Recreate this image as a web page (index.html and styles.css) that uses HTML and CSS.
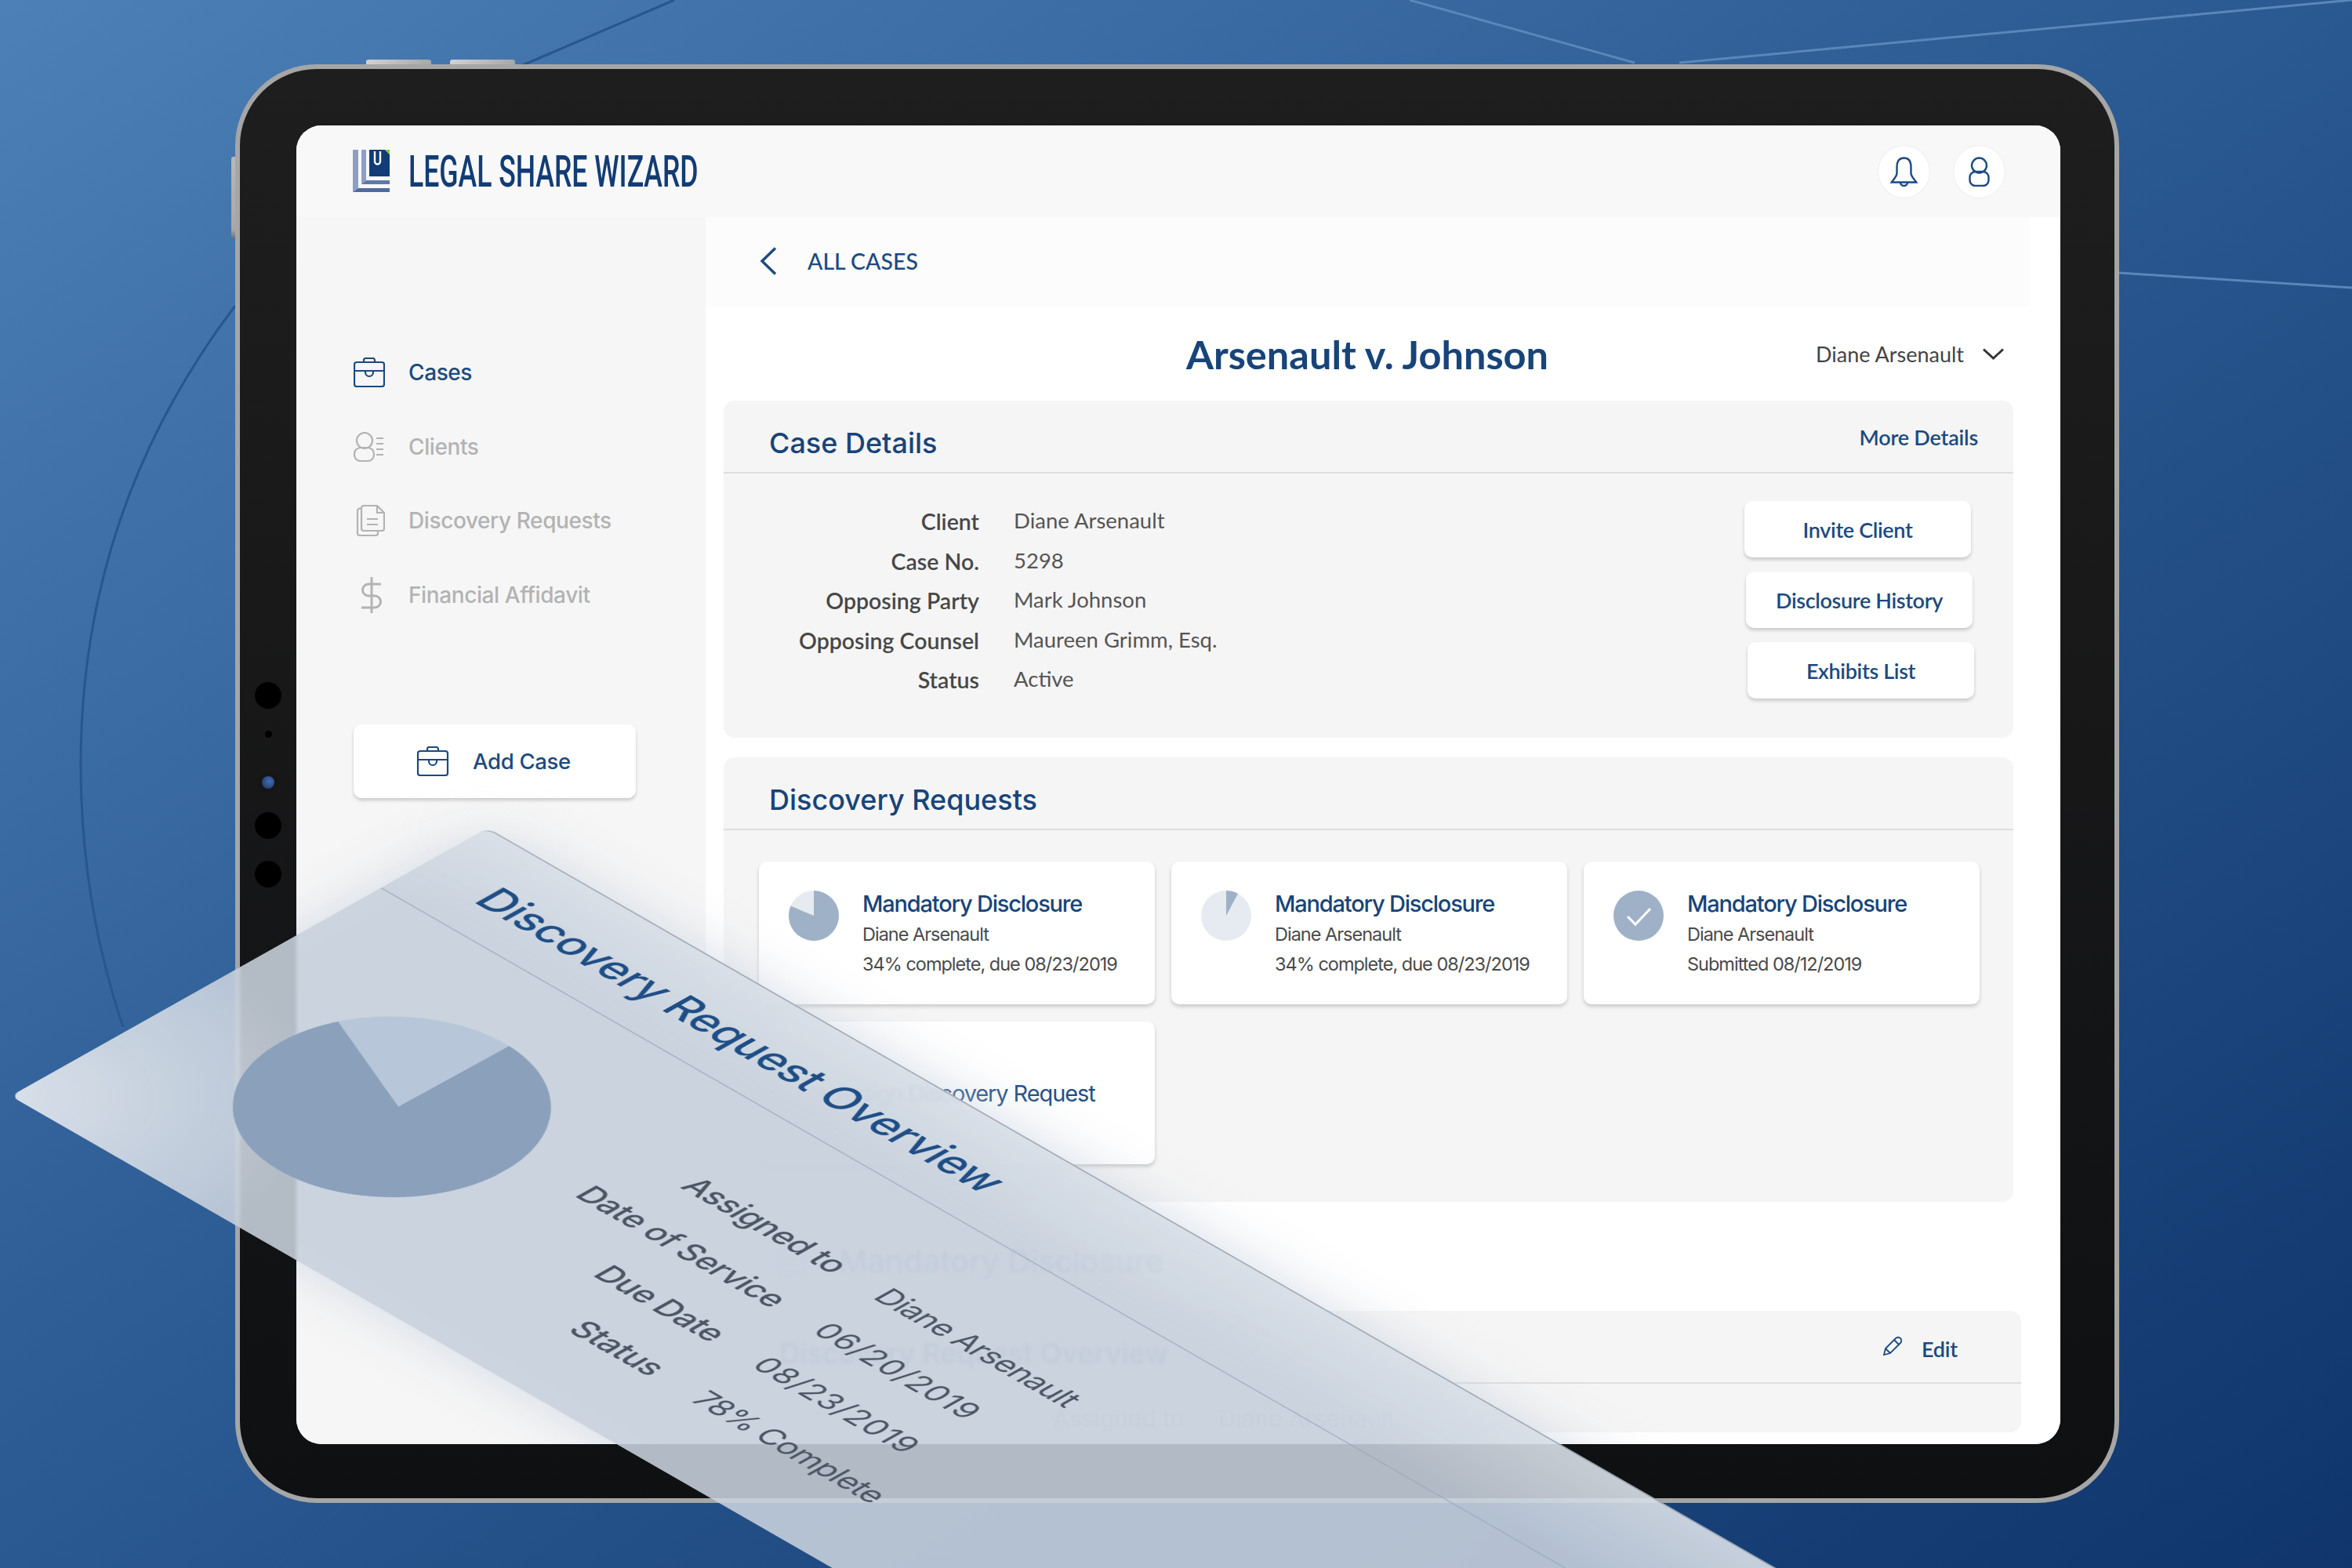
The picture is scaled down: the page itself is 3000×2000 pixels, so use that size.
FILE: index.html
```html
<!DOCTYPE html>
<html lang="en">
<head>
    <meta charset="UTF-8">
    <title>Legal Share Wizard</title>
    <link rel="stylesheet" href="styles.css">
</head>
<body>
<div class="stage">
    <svg class="bg-lines" width="3000" height="2000" viewBox="0 0 3000 2000" fill="none">
        <path class="line-dark" d="M300 390Q103 650 103 975Q103 1150 157 1310"/>
        <path class="line-dark" d="M660 86L860 0"/>
        <path class="line-dark" d="M440 1917L348 2000"/>
        <path class="line-light" d="M1798 0L2085 80"/>
        <path class="line-light" d="M2142 80L3000 0"/>
        <path class="line-light" d="M2703 348L3000 367"/>
    </svg>

    <div class="tablet">
        <span class="hw-btn hw-top-a"></span>
        <span class="hw-btn hw-top-b"></span>
        <span class="hw-btn hw-side"></span>
        <div class="sensors">
            <span class="sensor"></span>
            <span class="sensor-dot"></span>
            <span class="sensor-lens"></span>
            <span class="sensor"></span>
            <span class="sensor"></span>
        </div>

        <div class="screen">
            <header class="topbar">
                <svg class="logo" width="47" height="54" viewBox="0 0 47 54">
                    <path fill="#8f9fc4" d="M0 0H7V49L0 54Z"/>
                    <path fill="#4f6c9e" d="M0 54L7 49H47V54Z"/>
                    <path fill="#8f9fc4" d="M11 0H17V39L11 44Z"/>
                    <path fill="#5f7aa8" d="M11 44L17 39H47V44Z"/>
                    <path fill="#123c75" d="M21 0H41L47 6V34H21Z"/>
                    <path fill="#8ccb1e" d="M41 0H47V6Z"/>
                    <path fill="none" stroke="#fff" stroke-width="2.4" d="M28 2V15a3.5 3.5 0 0 0 7 0V2"/>
                </svg>
                <span class="brand">LEGAL SHARE WIZARD</span>
                <div class="top-actions">
                    <span class="round-btn">
                        <svg width="35" height="38" viewBox="0 0 35 38" fill="none" stroke="#1b4a80" stroke-width="2.4">
                            <path d="M17.5 1.5C10.500 1.500 8.500 7 8.500 13V21C8.500 25 4 29 1.800 32.500H33.200C31 29 26.500 25 26.500 21V13C26.500 7 24.500 1.500 17.500 1.500Z"/>
                            <path d="M13 32.500a4.500 4.500 0 0 0 9 0"/>
                        </svg>
                    </span>
                    <span class="round-btn">
                        <svg width="27" height="38" viewBox="0 0 27 38" fill="none" stroke="#1b4a80" stroke-width="2.4">
                            <ellipse cx="13.500" cy="11" rx="9.500" ry="9.500"/>
                            <rect x="1.500" y="19" width="24" height="18" rx="7"/>
                        </svg>
                    </span>
                </div>
            </header>

            <div class="layout">
                <aside class="sidebar">
                    <nav class="nav">
                        <a class="nav-item active">
                            <span class="nav-icon">
                                <svg width="40" height="38" viewBox="0 0 40 38" fill="none" stroke="#1b4a80" stroke-width="2.2">
                                    <rect x="1" y="6" width="38" height="31" rx="3"/>
                                    <path d="M1 17H39M13 6V3.500A2.500 2.500 0 0 1 15.500 1H24.500A2.500 2.500 0 0 1 27 3.500V6M15 17V19a5 5 0 0 0 10 0V17"/>
                                </svg>
                            </span>
                            Cases
                        </a>
                        <a class="nav-item">
                            <span class="nav-icon">
                                <svg width="40" height="38" viewBox="0 0 40 38" fill="none" stroke="#b3b3b3" stroke-width="2.2">
                                    <circle cx="14" cy="11" r="10"/>
                                    <rect x="1" y="20" width="25" height="17" rx="8"/>
                                    <path d="M29 8H38M29 15H38M29 22H38M29 29H38"/>
                                </svg>
                            </span>
                            Clients
                        </a>
                        <a class="nav-item">
                            <span class="nav-icon">
                                <svg width="40" height="40" viewBox="0 0 40 40" fill="none" stroke="#b3b3b3" stroke-width="2.2">
                                    <path d="M10 4.500H8A3 3 0 0 0 5 7.500V36A3 3 0 0 0 8 39H28A3 3 0 0 0 31 36V33"/>
                                    <path d="M13 1H30L39 10V30A3 3 0 0 1 36 33H13A3 3 0 0 1 10 30V4A3 3 0 0 1 13 1Z"/>
                                    <path d="M30 1V10H39M17 18H31M17 25H31"/>
                                </svg>
                            </span>
                            Discovery Requests
                        </a>
                        <a class="nav-item">
                            <span class="nav-icon">
                                <svg class="nudge-icon" width="28" height="46" viewBox="0 0 28 46" fill="none" stroke="#b3b3b3" stroke-width="3">
                                    <path d="M14 0V46M26 9H10a7.500 7.500 0 0 0 0 15H18a7.500 7.500 0 0 1 0 15H1"/>
                                </svg>
                            </span>
                            Financial Affidavit
                        </a>
                    </nav>
                    <button class="add-case">
                        <svg width="42" height="38" viewBox="0 0 40 38" fill="none" stroke="#1b4a80" stroke-width="2.2">
                            <rect x="1" y="6" width="38" height="31" rx="3"/>
                            <path d="M1 17H39M13 6V3.500A2.500 2.500 0 0 1 15.500 1H24.500A2.500 2.500 0 0 1 27 3.500V6M15 17V19a5 5 0 0 0 10 0V17"/>
                        </svg>
                        Add Case
                    </button>
                </aside>

                <main class="main">
                    <div class="crumb">
                        <svg width="22" height="36" viewBox="0 0 22 36" fill="none" stroke="#1b4a80" stroke-width="3.4">
                            <path d="M20 1.500L3 18L20 34.500"/>
                        </svg>
                        <span>ALL CASES</span>
                    </div>

                    <div class="title-row">
                        <h1 class="case-title">Arsenault v. Johnson</h1>
                        <div class="party-select">
                            Diane Arsenault
                            <svg width="27" height="15" viewBox="0 0 27 15" fill="none" stroke="#333" stroke-width="3">
                                <path d="M1 1.500L13.500 13L26 1.500"/>
                            </svg>
                        </div>
                    </div>

                    <section class="panel">
                        <div class="panel-head">
                            <h2>Case Details</h2>
                            <a class="head-link">More Details</a>
                        </div>
                        <div class="details-body">
                            <dl class="details">
                                <dt>Client</dt><dd>Diane Arsenault</dd>
                                <dt>Case No.</dt><dd>5298</dd>
                                <dt>Opposing Party</dt><dd>Mark Johnson</dd>
                                <dt>Opposing Counsel</dt><dd>Maureen Grimm, Esq.</dd>
                                <dt>Status</dt><dd>Active</dd>
                            </dl>
                            <div class="actions">
                                <button class="action action-a">Invite Client</button>
                                <button class="action action-b">Disclosure History</button>
                                <button class="action action-c">Exhibits List</button>
                            </div>
                        </div>
                    </section>

                    <section class="panel panel-requests">
                        <div class="panel-head">
                            <h2>Discovery Requests</h2>
                        </div>
                        <div class="cards">
                            <article class="card">
                                <svg class="pie" width="64" height="64" viewBox="0 0 64 64">
                                    <circle cx="32" cy="32" r="32" fill="#e6ebf1"/>
                                    <path fill="#9fb1c7" d="M32 32V0A32 32 0 1 1 2.500 19.500Z"/>
                                </svg>
                                <div class="card-text">
                                    <h3>Mandatory Disclosure</h3>
                                    <p>Diane Arsenault</p>
                                    <p>34% complete, due 08/23/2019</p>
                                </div>
                            </article>
                            <article class="card">
                                <svg class="pie" width="64" height="64" viewBox="0 0 64 64">
                                    <circle cx="32" cy="32" r="32" fill="#e6ebf1"/>
                                    <path fill="#9fb1c7" d="M32 32V0A32 32 0 0 1 47 3.700Z"/>
                                </svg>
                                <div class="card-text">
                                    <h3>Mandatory Disclosure</h3>
                                    <p>Diane Arsenault</p>
                                    <p>34% complete, due 08/23/2019</p>
                                </div>
                            </article>
                            <article class="card">
                                <svg class="pie" width="64" height="64" viewBox="0 0 64 64">
                                    <circle cx="32" cy="32" r="32" fill="#9fb1c7"/>
                                    <path fill="none" stroke="#fff" stroke-width="3" d="M18 33L28 43L47 23"/>
                                </svg>
                                <div class="card-text">
                                    <h3>Mandatory Disclosure</h3>
                                    <p>Diane Arsenault</p>
                                    <p>Submitted 08/12/2019</p>
                                </div>
                            </article>
                            <article class="card card-add">+ Assign Discovery Request</article>
                        </div>
                    </section>

                    <div class="section-title">
                        <svg width="40" height="40" viewBox="0 0 40 40" fill="none" stroke="#9db0c6" stroke-width="2.2">
                            <path d="M10 4.500H8A3 3 0 0 0 5 7.500V36A3 3 0 0 0 8 39H28A3 3 0 0 0 31 36V33"/>
                            <path d="M13 1H30L39 10V30A3 3 0 0 1 36 33H13A3 3 0 0 1 10 30V4A3 3 0 0 1 13 1Z"/>
                            <path d="M17 18H31M17 25H31"/>
                        </svg>
                        <span>Mandatory Disclosure</span>
                    </div>

                    <section class="panel panel-overview">
                        <div class="panel-head">
                            <h2>Discovery Request Overview</h2>
                            <a class="head-link edit-link">
                                <svg width="26" height="26" viewBox="0 0 26 26" fill="none" stroke="#1b4a80" stroke-width="1.800">
                                    <path d="M2 24L4 16L17 3A2.800 2.800 0 0 1 23 9L10 22ZM4 16L10 22M15 5L21 11"/>
                                </svg>
                                Edit
                            </a>
                        </div>
                        <div class="overview-row"><span>Assigned to</span><span>Diane Arsenault</span></div>
                    </section>
                </main>
            </div>

            <div class="plane-haze"></div>
        </div>
    </div>

    <div class="plane">
        <div class="plane-head">Discovery Request Overview</div>
        <div class="plane-body">
            <svg class="plane-pie" width="330" height="330" viewBox="0 0 330 330">
                <circle cx="165" cy="165" r="165" fill="#b7c6d9"/>
                <path fill="#8aa0bb" d="M170 160L172 0A165 165 0 1 1 16 95Z"/>
            </svg>
            <dl class="plane-details">
                <dt>Assigned to</dt><dd>Diane Arsenault</dd>
                <dt>Date of Service</dt><dd class="plane-date">06/20/2019</dd>
                <dt>Due Date</dt><dd class="plane-date">08/23/2019</dd>
                <dt>Status</dt><dd>78% Complete</dd>
            </dl>
        </div>
    </div>
</div>
</body>
</html>
```

FILE: styles.css
```css
* {
    box-sizing: border-box;
}

html, body {
    margin: 0;
    padding: 0;
}

h1, h2, h3, p, dl, dd {
    margin: 0;
}

.stage {
    position: relative;
    width: 3000px;
    height: 2000px;
    padding: 82px 0 0 300px;
    overflow: hidden;
    font-family: "Inter", "Liberation Sans", sans-serif;
    background: linear-gradient(to bottom right, #4c80b6 0%, #2a5890 50%, #0f356c 100%);
}

.bg-lines {
    position: absolute;
    left: 0;
    top: 0;
}

.line-dark {
    stroke: #28568e;
    stroke-width: 3;
}

.line-light {
    stroke: #5a87b9;
    stroke-width: 3;
}

/* tablet */
.tablet {
    position: relative;
    width: 2403px;
    height: 1835px;
    padding: 72px 67px 70px 72px;
    border: 6px solid #a6a6a6;
    border-radius: 104px;
    background: linear-gradient(#1e1e1e, #0f1012);
}

.hw-btn {
    position: absolute;
    background: linear-gradient(90deg, #d2d2d2, #a8a8a8);
}

.hw-top-a,
.hw-top-b {
    top: -12px;
    width: 83px;
    height: 6px;
    border-radius: 3px 3px 0 0;
}

.hw-top-a {
    left: 161px;
}

.hw-top-b {
    left: 268px;
}

.hw-side {
    left: -11px;
    top: 112px;
    width: 5px;
    height: 103px;
    border-radius: 3px 0 0 3px;
    background: linear-gradient(#b8b8b8, #a8a8a8 90%, #777);
}

.sensors {
    position: absolute;
    left: 19px;
    top: 782px;
    width: 34px;
    display: flex;
    flex-direction: column;
    align-items: center;
}

.sensor {
    width: 34px;
    height: 34px;
    border-radius: 50%;
    background: #000;
}

.sensor + .sensor {
    margin-top: 28px;
}

.sensor-dot {
    width: 9px;
    height: 9px;
    margin-top: 28px;
    border-radius: 50%;
    background: #000;
}

.sensor-lens {
    width: 16px;
    height: 16px;
    margin: 49px 0 30px;
    border-radius: 50%;
    background: radial-gradient(circle at 60% 40%, #3f6fb5, #232a5c);
    box-shadow: 0 0 0 5px #151515;
}

/* screen */
.screen {
    position: relative;
    width: 2250px;
    height: 1682px;
    border-radius: 32px;
    overflow: hidden;
    background: #fff;
}

.topbar {
    display: flex;
    align-items: center;
    height: 117px;
    padding: 0 71px 0 72px;
    background: #f8f8f8;
}

.logo {
    flex-shrink: 0;
    margin-top: -1px;
}

.brand {
    margin-left: 24px;
    font-family: "Roboto", sans-serif;
    font-size: 55px;
    font-weight: 500;
    color: #123c75;
    white-space: nowrap;
    transform: scaleX(0.647);
    transform-origin: left center;
}

.top-actions {
    display: flex;
    gap: 31px;
    margin-left: auto;
}

.round-btn {
    display: flex;
    align-items: center;
    justify-content: center;
    width: 65px;
    height: 66px;
    border-radius: 50%;
    background: #fff;
    box-shadow: 0 0 2px rgba(0, 0, 0, 0.12);
}

.layout {
    display: grid;
    grid-template-columns: 522px 1728px;
    height: 1565px;
}

/* sidebar */
.sidebar {
    padding: 151px 0 0 73px;
    background: #f6f6f6;
}

.nav-item {
    display: flex;
    align-items: center;
    height: 94.500px;
    font-size: 28px;
    font-weight: 500;
    letter-spacing: -0.4px;
    color: #b3b3b3;
}

.nav-item.active {
    color: #1b4a80;
}

.nav-icon {
    display: flex;
    justify-content: flex-start;
    width: 70px;
}

.nudge-icon {
    margin-left: 9px;
}

.add-case {
    display: flex;
    align-items: center;
    gap: 30px;
    width: 360px;
    height: 94px;
    margin-top: 118px;
    padding: 0 0 0 80px;
    border: none;
    border-radius: 10px;
    background: #fff;
    box-shadow: 0 3px 4px rgba(0, 0, 0, 0.18);
    font-family: inherit;
    font-size: 27.500px;
    font-weight: 500;
    letter-spacing: -0.3px;
    color: #1b4a80;
}

/* main column */
.main {
    padding-left: 23px;
    overflow: hidden;
    background: #fff;
}

.crumb {
    display: flex;
    align-items: center;
    gap: 39px;
    width: 1689px;
    height: 114px;
    margin-left: -23px;
    padding: 0 0 2px 69px;
    background: #fcfcfc;
    font-family: "Lato", sans-serif;
    font-size: 28.500px;
    font-weight: 500;
    color: #1b4a80;
}

.title-row {
    position: relative;
    display: flex;
    align-items: center;
    justify-content: center;
    width: 1645px;
    height: 120px;
    padding-right: 3px;
}

.case-title {
    font-family: "Lato", sans-serif;
    font-size: 50.500px;
    font-weight: 700;
    color: #174479;
}

.party-select {
    position: absolute;
    right: 12px;
    top: 0;
    bottom: 0;
    display: flex;
    align-items: center;
    gap: 24px;
    font-family: "Lato", sans-serif;
    font-size: 27px;
    color: #444;
}

.panel {
    width: 1645px;
    border-radius: 14px;
    background: #f5f5f5;
}

.panel-requests {
    height: 567px;
    margin-top: 25px;
}

.panel-overview {
    width: 1655px;
}

.panel-overview h2 {
    margin-left: 13px;
}

.panel-head {
    display: flex;
    justify-content: space-between;
    height: 93px;
    padding: 0 45px 0 58px;
    border-bottom: 2px solid #dedede;
}

.panel-head h2 {
    padding-top: 32px;
    font-size: 36px;
    font-weight: 500;
    line-height: 44px;
    color: #174479;
}

.head-link {
    padding-top: 30px;
    font-family: "Lato", sans-serif;
    font-size: 27px;
    font-weight: 600;
    line-height: 34px;
    letter-spacing: -0.2px;
    color: #1b4a80;
}

.details-body {
    display: flex;
    justify-content: space-between;
    height: 337px;
    padding: 35px 50px 0 0;
}

.details {
    display: grid;
    grid-template-columns: 326px 1fr;
    grid-auto-rows: 50.500px;
    column-gap: 44px;
    font-family: "Lato", sans-serif;
    line-height: 50px;
}

.details dt {
    padding-top: 1px;
    font-size: 28.500px;
    font-weight: 600;
    text-align: right;
    color: #474747;
}

.details dd {
    font-size: 27.500px;
    color: #555;
}

.actions {
    display: flex;
    flex-direction: column;
    gap: 18px;
    align-items: flex-end;
}

.action {
    width: 289px;
    height: 72px;
    padding: 0;
    border: none;
    border-radius: 10px;
    background: #fff;
    box-shadow: 0 3px 4px rgba(0, 0, 0, 0.18);
    font-family: "Lato", sans-serif;
    font-size: 27px;
    font-weight: 600;
    letter-spacing: -0.35px;
    color: #1b4a80;
}

.action-a {
    margin-right: 4px;
}

.action-b {
    margin-right: 2px;
}

/* request cards */
.cards {
    display: grid;
    grid-template-columns: repeat(3, 505px);
    grid-auto-rows: 182px;
    gap: 22px 21px;
    padding: 40px 0 0 45px;
}

.card {
    display: flex;
    gap: 30px;
    padding: 37px 0 0 38px;
    border-radius: 10px;
    background: #fff;
    box-shadow: 0 3px 5px rgba(0, 0, 0, 0.18);
}

.pie {
    flex-shrink: 0;
}

.card-text {
    margin-top: -3px;
}

.card-text h3 {
    font-size: 29px;
    font-weight: 500;
    line-height: 40px;
    letter-spacing: -1.2px;
    color: #174479;
}

.card-text p {
    font-size: 23.500px;
    line-height: 38px;
    letter-spacing: -1px;
    color: #4a4a4a;
}

.card-add {
    align-items: center;
    justify-content: center;
    gap: 0;
    padding: 0 4px 0 0;
    font-size: 29px;
    letter-spacing: -1.1px;
    color: #1f4e85;
}

/* section under the cards, mostly behind the glass plane */
.section-title {
    display: flex;
    align-items: center;
    gap: 42px;
    height: 139px;
    padding: 12px 0 0 65px;
    font-size: 40px;
    color: #174479;
}

.edit-link {
    display: flex;
    gap: 24px;
    height: 60px;
    padding-top: 32px;
    padding-right: 36px;
}

.overview-row {
    display: flex;
    gap: 44px;
    padding: 26px 0 0 420px;
    font-size: 30px;
    color: #aaa;
}

/* glass plane in front of the tablet */
.plane-haze {
    position: absolute;
    left: 0;
    top: 0;
    width: 2400px;
    height: 698px;
    background: rgba(195, 205, 218, 0.7);
    filter: blur(42px);
    transform: matrix(0.867, 0.498, -0.872, 0.49, 244, 896);
    transform-origin: 0 0;
}

.plane {
    position: absolute;
    left: 0;
    top: 0;
    width: 2400px;
    height: 698px;
    border-top: 2px solid rgba(140, 150, 165, 0.65);
    border-radius: 12px 0 0 12px;
    background:
        radial-gradient(circle at 0 100%, rgba(255, 255, 255, 0.45), rgba(255, 255, 255, 0) 320px),
        linear-gradient(rgba(255, 255, 255, 0.25), rgba(255, 255, 255, 0) 140px),
        rgba(200, 209, 221, 0.88);
    backdrop-filter: blur(2px);
    transform: matrix(0.867, 0.498, -0.872, 0.49, 622, 1056);
    transform-origin: 0 0;
}

.plane-head {
    height: 155px;
    padding: 52px 0 0 84px;
    border-bottom: 2px solid rgba(150, 165, 185, 0.6);
    font-size: 56px;
    font-weight: 500;
    line-height: 64px;
    letter-spacing: -0.8px;
    color: #1f4e85;
}

.plane-body {
    display: flex;
    padding: 105px 0 0 126px;
}

.plane-pie {
    flex-shrink: 0;
    margin-top: 3px;
}

.plane-details {
    display: grid;
    grid-template-columns: 372px 1fr;
    grid-auto-rows: 89px;
    column-gap: 60px;
    font-size: 40px;
    line-height: 89px;
    letter-spacing: -1.1px;
    color: #4b5563;
}

.plane-details dt {
    font-size: 41px;
    font-weight: 500;
    letter-spacing: -0.8px;
    text-align: right;
}

.plane-details dd {
    font-weight: 400;
}

.plane-details .plane-date {
    letter-spacing: 0.8px;
}
```
